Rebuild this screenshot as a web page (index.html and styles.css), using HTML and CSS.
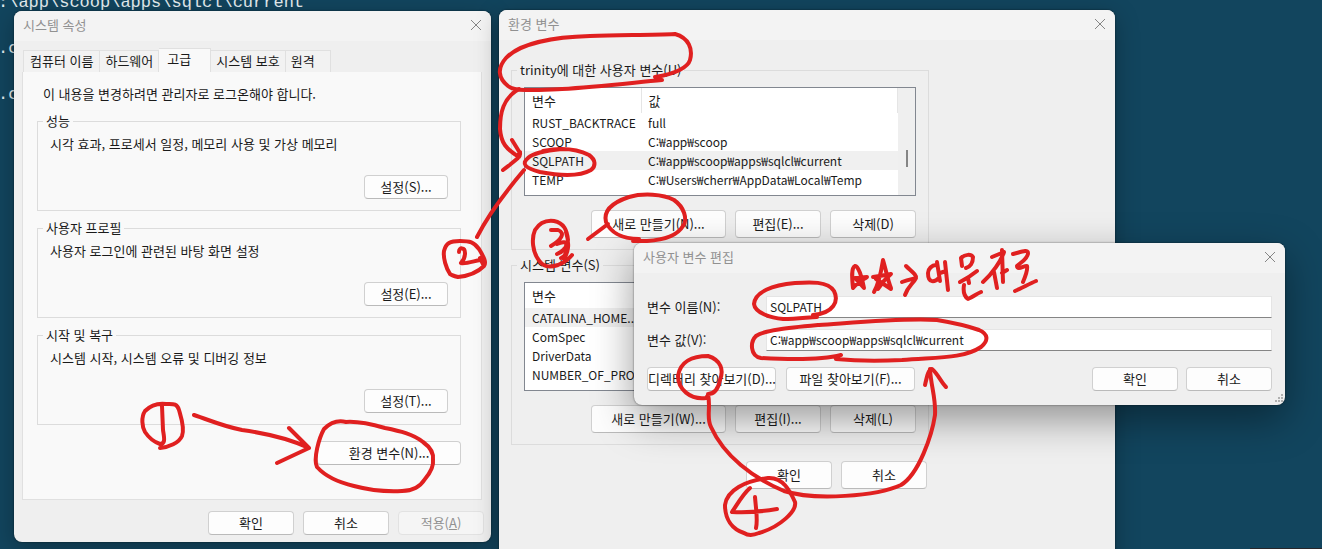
FILE: index.html
```html
<!DOCTYPE html>
<html lang="ko">
<head>
<meta charset="utf-8">
<title>환경 변수</title>
<link rel="stylesheet" href="styles.css">
</head>
<body>
<main class="desktop">
  <div class="terminal">
    <p>:\app\scoop\apps\sqlcl\current</p>
    <p>.c</p>
    <p>.c</p>
  </div>
  <div class="tray" aria-hidden="true"></div>

  <section class="window system" aria-label="시스템 속성">
    <header class="titlebar">
      <h1>시스템 속성</h1>
      <button class="close" aria-label="닫기"><svg viewBox="0 0 12 12"><path d="M1 1l10 10M11 1L1 11"/></svg></button>
    </header>
    <div class="system-body">
      <nav class="tabs" role="tablist">
        <button class="tab" role="tab">컴퓨터 이름</button>
        <button class="tab" role="tab">하드웨어</button>
        <button class="tab active" role="tab" aria-selected="true">고급</button>
        <button class="tab" role="tab">시스템 보호</button>
        <button class="tab last" role="tab">원격</button>
      </nav>
      <div class="panel">
        <p class="notice">이 내용을 변경하려면 관리자로 로그온해야 합니다.</p>
        <fieldset class="group">
          <legend>성능</legend>
          <p>시각 효과, 프로세서 일정, 메모리 사용 및 가상 메모리</p>
          <button class="btn settings">설정(S)...</button>
        </fieldset>
        <fieldset class="group">
          <legend>사용자 프로필</legend>
          <p>사용자 로그인에 관련된 바탕 화면 설정</p>
          <button class="btn settings">설정(E)...</button>
        </fieldset>
        <fieldset class="group">
          <legend>시작 및 복구</legend>
          <p>시스템 시작, 시스템 오류 및 디버깅 정보</p>
          <button class="btn settings">설정(T)...</button>
        </fieldset>
        <button class="btn env">환경 변수(N)...</button>
      </div>
      <footer class="actions">
        <button class="btn">확인</button>
        <button class="btn">취소</button>
        <button class="btn" disabled>적용(<u>A</u>)</button>
      </footer>
    </div>
  </section>

  <section class="window variables" aria-label="환경 변수">
    <header class="titlebar">
      <h1>환경 변수</h1>
      <button class="close" aria-label="닫기"><svg viewBox="0 0 12 12"><path d="M1 1l10 10M11 1L1 11"/></svg></button>
    </header>
    <div class="variables-body">
      <fieldset class="vars">
        <legend>trinity에 대한 사용자 변수(U)</legend>
        <div class="list">
          <table>
            <colgroup><col class="name"><col></colgroup>
            <thead><tr><th>변수</th><th>값</th></tr></thead>
            <tbody>
              <tr><td>RUST_BACKTRACE</td><td>full</td></tr>
              <tr><td>SCOOP</td><td>C:₩app₩scoop</td></tr>
              <tr class="selected"><td>SQLPATH</td><td>C:₩app₩scoop₩apps₩sqlcl₩current</td></tr>
              <tr><td>TEMP</td><td>C:₩Users₩cherr₩AppData₩Local₩Temp</td></tr>
            </tbody>
          </table>
          <div class="scroll"><span class="thumb"></span></div>
        </div>
        <div class="row">
          <button class="btn wide">새로 만들기(N)...</button>
          <button class="btn">편집(E)...</button>
          <button class="btn">삭제(D)</button>
        </div>
      </fieldset>
      <fieldset class="vars">
        <legend>시스템 변수(S)</legend>
        <div class="list">
          <table>
            <colgroup><col class="name"><col></colgroup>
            <thead><tr><th>변수</th><th></th></tr></thead>
            <tbody>
              <tr class="selected"><td>CATALINA_HOME...</td><td></td></tr>
              <tr><td>ComSpec</td><td></td></tr>
              <tr><td>DriverData</td><td></td></tr>
              <tr><td>NUMBER_OF_PRO...</td><td></td></tr>
            </tbody>
          </table>
          <div class="scroll"></div>
        </div>
        <div class="row">
          <button class="btn wide">새로 만들기(W)...</button>
          <button class="btn">편집(I)...</button>
          <button class="btn">삭제(L)</button>
        </div>
      </fieldset>
      <footer class="row confirm">
        <button class="btn">확인</button>
        <button class="btn">취소</button>
      </footer>
    </div>
  </section>

  <section class="window edit" aria-label="사용자 변수 편집">
    <header class="titlebar">
      <h1>사용자 변수 편집</h1>
      <button class="close" aria-label="닫기"><svg viewBox="0 0 12 12"><path d="M1 1l10 10M11 1L1 11"/></svg></button>
    </header>
    <form class="form">
      <label for="var-name">변수 이름(N):</label>
      <input id="var-name" type="text" value="SQLPATH">
      <label for="var-value">변수 값(V):</label>
      <input id="var-value" type="text" value="C:₩app₩scoop₩apps₩sqlcl₩current">
      <div class="form-actions">
        <button type="button" class="btn browse">디렉터리 찾아보기(D)...</button>
        <button type="button" class="btn browse">파일 찾아보기(F)...</button>
        <span class="spacer"></span>
        <button type="button" class="btn">확인</button>
        <button type="button" class="btn">취소</button>
      </div>
    </form>
    <svg class="grip" viewBox="0 0 9 9" aria-hidden="true"><path d="M7 1h2M4 4h2M7 4h2M1 7h2M4 7h2M7 7h2"/></svg>
  </section>

  <svg class="ink" viewBox="0 0 1322 549" aria-hidden="true">
    <path d="M160 448C169 447 179 443 182 436C185 428 181 417 179 410C177 403 173 404 166 404C158 403 151 405 145 411C141 417 142 427 145 432C149 438 154 442 160 444C166 444 164 437 163 430L162 406"/>
    <path d="M194 415C212 421 222 426 242 430C263 433 288 438 309 448M289 428L309 448L277 463"/>
    <path d="M324 429C330 423 338 420 346 422C359 421 371 424 385 428C400 431 413 434 423 442C430 447 434 452 433 460C434 467 430 473 425 479C420 487 413 491 402 491C384 492 369 490 354 486C341 483 326 477 317 467C313 459 319 438 324 429"/>
    <path d="M450 274C446 268 443 258 444 251C446 243 450 241 460 241C470 241 474 242 479 249C483 256 487 262 484 266C477 273 468 276 458 277C454 276 451 275 450 274M459 252C459 247 465 247 465 253C465 258 462 262 461 263C466 264 474 261 480 260M480 258L483 264"/>
    <path d="M477 237C488 215 502 196 524 170"/>
    <path d="M568 240C567 230 564 223 554 221C546 220 540 222 535 230C531 239 533 252 538 259C543 267 549 268 558 265C563 263 568 260 572 255M551 230H558C566 233 561 240 551 246M557 244C570 238 569 249 557 254M564 249C568 249 566 256 561 258M566 232C570 245 568 252 564 259"/>
    <path d="M655 77C676 74 688 67 690 60C693 49 689 38 675 34C650 35 620 35 590 36C555 37 520 43 506 58C497 68 498 78 508 86C516 92 537 90 562 89C595 87 630 83 662 80"/>
    <path d="M519 89C503 98 500 113 500 129C501 143 506 149 519 157M512 140L520 153C521 157 516 160 503 170M518 156L520 152"/>
    <path d="M543 151C564 147 579 150 589 155C596 160 596 166 591 170C579 177 556 175 540 172C525 168 521 164 528 158C533 153 543 151 562 149"/>
    <path d="M588 239L608 224M639 239C620 239 610 231 606 222C603 210 614 202 629 197C643 193 663 194 674 200C684 207 688 219 683 226C677 236 665 240 647 241H633"/>
    <path d="M813 315C834 313 839 301 834 291C828 281 810 282 795 283C772 285 755 292 754 304C755 313 771 318 783 319C799 319 809 317 817 317"/>
    <path d="M841 355C818 361 779 359 761 358C750 356 750 342 756 336C765 330 787 328 819 325C850 323 899 318 937 320C955 323 965 325 979 330C988 334 989 340 981 347C963 359 936 357 902 360C883 361 856 361 836 359"/>
    <path d="M709 394L706 398C690 400 678 389 678 376C680 362 692 356 708 356C721 360 724 370 720 380C718 390 713 394 708 394C711 408 706 418 711 427C724 456 753 478 784 491C815 501 877 496 901 485C919 474 932 435 935 415C936 398 931 387 930 369"/>
    <path d="M925 385C927 376 928 370 932 369C938 374 941 382 946 387"/>
    <path d="M744 533C732 529 725 519 725 505C727 490 745 481 768 478C783 477 790 491 795 502C797 511 780 527 759 533C752 536 747 535 744 533M750 488C743 494 738 503 732 512C745 513 759 512 777 509M755 497C756 510 758 520 756 528"/>
    <path d="M853 288C852 278 851 268 855 266C858 265 862 277 864 288L855 278L867 277C861 281 857 283 853 288"/>
    <path d="M874 292C880 281 882 266 883 260C886 270 888 281 891 288M873 277C880 276 886 275 891 274C885 279 881 284 878 289M876 279L891 289"/>
    <path d="M906 266C911 271 917 275 916 278C913 284 908 286 905 295M902 282C907 280 912 279 916 278"/>
    <path d="M936 265C932 265 928 269 928 273C928 284 935 282 939 278M937 262L940 281M940 273L946 271M945 262L948 290"/>
    <path d="M962 266L961 258C965 254 971 254 973 257C973 263 970 267 966 268M960 282C966 279 972 275 977 271M968 278L969 283M964 285C963 291 964 296 968 299C973 297 976 294 981 292"/>
    <path d="M992 257L1004 252C1001 261 992 274 983 282M994 272L997 288M1002 250L1003 282M1002 273L1007 270"/>
    <path d="M1013 254C1021 252 1028 249 1028 253C1028 259 1021 262 1017 266C1017 271 1025 265 1027 266C1028 270 1026 275 1023 282M1015 291C1022 288 1029 284 1036 281"/>
  </svg>
</main>
</body>
</html>
```
FILE: styles.css
```css
* { box-sizing: border-box; }

body {
  margin: 0;
  font: 13px/20px "Noto Sans CJK KR", sans-serif;
  color: #1a1a1a;
}

h1, p, fieldset { margin: 0; padding: 0; }

button, input { font: inherit; color: inherit; }

.desktop {
  position: relative;
  height: 100vh;
  overflow: hidden;
  background: #12455e;
}

.terminal {
  position: absolute;
  left: -2px;
  top: -9px;
  display: flex;
  flex-direction: column;
  align-items: flex-start;
  gap: 23px;
  font: 17px/23px "Liberation Mono", monospace;
  color: #e4edf0;
}

.tray {
  position: absolute;
  right: 0;
  bottom: 0;
  width: 72px;
  height: 1px;
  background: #27272b;
}

.window {
  position: absolute;
  display: flex;
  flex-direction: column;
  border-radius: 8px;
  background: #efefef;
  box-shadow: 0 0 2px rgba(0, 0, 0, .6), 0 6px 24px rgba(0, 0, 0, .28);
}

.system { left: 14px; top: 11px; width: 477px; }
.variables { left: 499px; top: 10px; width: 616px; min-height: 560px; }
.edit {
  left: 634px;
  top: 243px;
  width: 651px;
  box-shadow: 0 0 2px rgba(0, 0, 0, .6), 0 14px 40px rgba(0, 0, 0, .4);
}

.titlebar {
  display: flex;
  justify-content: space-between;
  align-items: center;
  height: 30px;
  padding: 0 9px 2px;
  border-radius: 8px 8px 0 0;
  background: #f3f3f3;
}

.titlebar h1 { font-size: 13px; font-weight: 400; color: #919191; }

.close {
  display: flex;
  padding: 0;
  border: 0;
  background: none;
}

.close svg {
  width: 12px;
  height: 12px;
  fill: none;
  stroke: #858585;
}

.btn {
  width: 86px;
  height: 24px;
  padding: 0;
  border: 1px solid #d0d0d0;
  border-bottom-color: #bababa;
  border-radius: 4px;
  background: #fdfdfd;
  line-height: 20px;
  white-space: nowrap;
}

.btn:disabled { border-color: #e2e2e2; background: #f5f5f5; color: #919191; }

.system-body { padding: 7px 7px 7px 8px; }

.tabs { display: flex; align-items: flex-end; height: 24px; padding-left: 1px; }

.tab {
  height: 22px;
  padding: 0 5px 2px;
  border: 1px solid #e0e0e0;
  border-width: 1px 1px 0 0;
  background: #f2f2f2;
  line-height: 19px;
  white-space: nowrap;
}

.tab:first-child { padding: 0 6px 2px; border-left-width: 1px; }
.tab.active { height: 24px; padding: 0 19px 4px 8px; background: #f9f9f9; }
.tab.last { padding-right: 15px; }

.panel {
  display: flex;
  flex-direction: column;
  gap: 7px;
  height: 428px;
  margin-right: 2px;
  padding: 12px 20px 0 14px;
  border: 1px solid #e0e0e0;
  border-top: 0;
  background: #f9f9f9;
}

.notice { padding-left: 6px; }

.group {
  display: flex;
  flex-direction: column;
  height: 100px;
  padding: 3px 12px 0;
  border: 1px solid #dcdcdc;
}

.group legend { margin-left: -7px; padding: 0 3px; }
.settings { align-self: flex-end; width: 84px; margin-top: 21px; }
.env { align-self: flex-end; width: 144px; margin-top: 9px; }

.actions { display: flex; justify-content: flex-end; gap: 9px; padding-top: 11px; }

.variables-body { padding: 20px 12px; }

.vars {
  width: 418px;
  height: 190px;
  padding: 7px 12px 0;
  border: 1px solid #dcdcdc;
}

.vars + .vars { margin-top: 5px; }
.vars legend { margin-left: -7px; padding: 0 3px; }

.list {
  display: flex;
  height: 109px;
  border: 1px solid #828790;
  background: #fff;
  overflow: hidden;
}

.list table {
  flex: 1;
  align-self: flex-start;
  width: 100%;
  table-layout: fixed;
  border-collapse: collapse;
}

.list .name { width: 116px; }
.list th, .list td { padding: 0 7px; text-align: left; font-weight: 400; white-space: nowrap; }
.list th { height: 25px; border-right: 1px solid #e5e5e5; }
.list td { height: 19px; font-size: 12px; line-height: 19px; }
.list .selected { background: #f0f0f0; }

.scroll {
  display: flex;
  flex: none;
  justify-content: center;
  align-items: flex-end;
  width: 17px;
  padding-bottom: 28px;
  background: #efefef;
}

.thumb { width: 2px; height: 17px; background: #858585; }

.row { display: flex; justify-content: flex-end; gap: 9px; margin-top: 14px; }
.row .btn { height: 28px; }
.row .wide { width: 135px; }
.confirm { width: 416px; margin-top: 16px; }

.form {
  display: grid;
  grid-template-columns: 105px 1fr;
  gap: 11px 14px;
  align-items: center;
  padding: 23px 13px 14px;
}

.form label { white-space: nowrap; }

.form input {
  width: 100%;
  height: 22px;
  padding: 0 3px 2px;
  border: 1px solid #e5e5e5;
  border-bottom-color: #858585;
  border-radius: 0;
  background: #fff;
  font-size: 12px;
}

.form-actions { grid-column: 1 / -1; display: flex; gap: 8px; padding-top: 5px; }
.browse { width: 129px; }
.browse + .browse { margin-left: 2px; }
.spacer { flex: 1; }

.grip {
  position: absolute;
  right: 2px;
  bottom: 2px;
  width: 9px;
  height: 9px;
  fill: none;
  stroke: #b0b0b0;
  stroke-width: 2;
}

.ink {
  position: absolute;
  left: 0;
  top: 0;
  width: 1322px;
  height: 549px;
  fill: none;
  stroke: #e02020;
  stroke-width: 4;
  stroke-linecap: round;
  stroke-linejoin: round;
  pointer-events: none;
}
```
